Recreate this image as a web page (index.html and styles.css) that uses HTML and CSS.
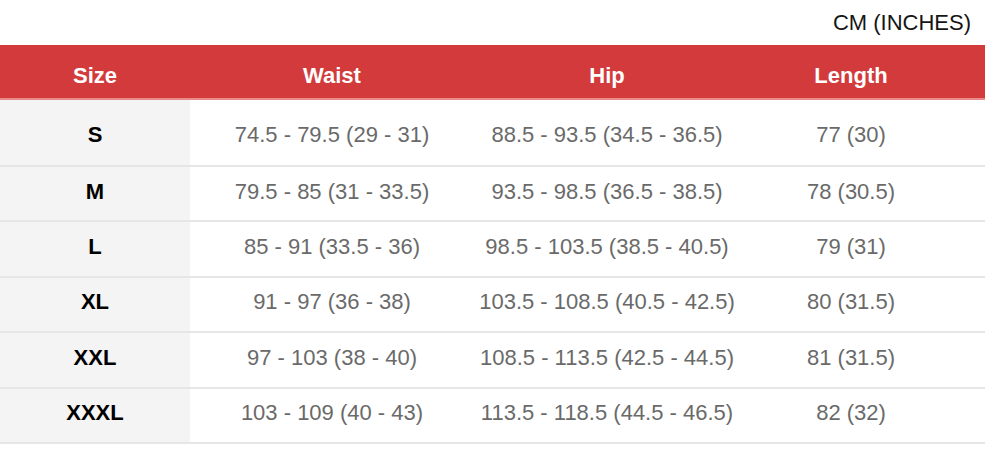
FILE: index.html
```html
<!DOCTYPE html>
<html>
<head>
<meta charset="utf-8">
<link rel="stylesheet" href="styles.css">
</head>
<body>
<div class="unit">CM (INCHES)</div>
<table class="chart">
  <colgroup>
    <col class="c1"><col class="c2"><col class="c3"><col class="c4">
  </colgroup>
  <thead>
    <tr><th>Size</th><th>Waist</th><th>Hip</th><th class="len">Length</th></tr>
  </thead>
  <tbody>
    <tr class="first"><td>S</td><td>74.5 - 79.5 (29 - 31)</td><td>88.5 - 93.5 (34.5 - 36.5)</td><td class="len">77 (30)</td></tr>
    <tr><td>M</td><td>79.5 - 85 (31 - 33.5)</td><td>93.5 - 98.5 (36.5 - 38.5)</td><td class="len">78 (30.5)</td></tr>
    <tr><td>L</td><td>85 - 91 (33.5 - 36)</td><td>98.5 - 103.5 (38.5 - 40.5)</td><td class="len">79 (31)</td></tr>
    <tr><td>XL</td><td>91 - 97 (36 - 38)</td><td>103.5 - 108.5 (40.5 - 42.5)</td><td class="len">80 (31.5)</td></tr>
    <tr><td>XXL</td><td>97 - 103 (38 - 40)</td><td>108.5 - 113.5 (42.5 - 44.5)</td><td class="len">81 (31.5)</td></tr>
    <tr><td>XXXL</td><td>103 - 109 (40 - 43)</td><td>113.5 - 118.5 (44.5 - 46.5)</td><td class="len">82 (32)</td></tr>
  </tbody>
</table>
</body>
</html>
```
FILE: styles.css
```css
html, body {
  margin: 0;
  padding: 0;
  background: #fff;
  font-family: "Liberation Sans", Arial, sans-serif;
}
.unit {
  height: 45px;
  box-sizing: border-box;
  padding: 8px 14px 0 0;
  text-align: right;
  font-size: 22px;
  line-height: 30px;
  color: #151515;
}
.chart {
  width: 985px;
  border-collapse: collapse;
  table-layout: fixed;
}
.c1 { width: 190px; }
.c2 { width: 284px; }
.c3 { width: 266px; }
.c4 { width: 245px; }
.chart th {
  background: #d33a3b;
  color: #fff;
  font-size: 22px;
  font-weight: bold;
  height: 45px;
  padding: 8px 0 0 0;
  text-align: center;
  border-bottom: 2px solid #e98a8b;
}
.chart td {
  height: 49.4px;
  padding: 0 0 4px 0;
  text-align: center;
  font-size: 22px;
  color: #6a6a6a;
  border-bottom: 2px solid #e6e6e6;
}
.chart tr.first td {
  height: 60px;
  padding: 5px 0 0 0;
}
.chart th.len,
.chart td.len,
.chart tr.first td.len { padding-right: 23px; }
.chart td:first-child {
  background: #f4f4f4;
  color: #000;
  font-weight: bold;
}
```
